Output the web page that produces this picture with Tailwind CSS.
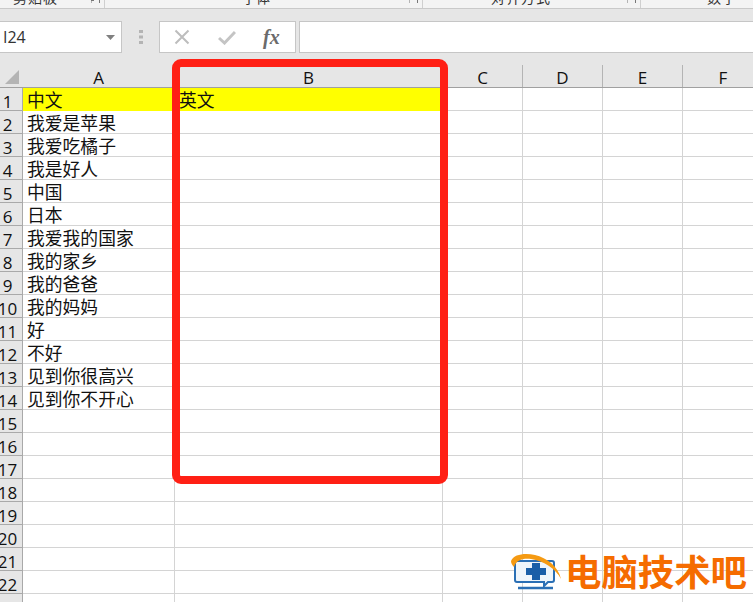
<!DOCTYPE html>
<html lang="zh">
<head>
<meta charset="utf-8">
<script src="https://cdn.jsdelivr.net/npm/@tailwindcss/browser@4"></script>
</head>
<body class="m-0 w-[753px] h-[602px] overflow-hidden bg-white font-['Liberation_Sans','Noto_Sans_CJK_SC',sans-serif] text-black">
<div class="relative w-[753px] h-[602px] overflow-hidden">

  <!-- ribbon remains -->
  <div class="flex h-[9px] overflow-hidden bg-[#f3f3f3] border-b border-[#c9c9c9] text-[14px] leading-[16px] text-[#333] items-end">
    <div class="flex w-[105px] h-[8px] items-end border-r border-[#cfcfcf] pl-[13px] pr-[4px]"><span class="shrink-0 tracking-[1px] mb-[2px]">剪贴板</span><svg class="ml-auto mb-[5px]" width="9" height="3"><path d="M0 .5H3M0 0V3M8.5 0V3" stroke="#777" fill="none"/></svg></div>
    <div class="flex w-[318px] h-[8px] items-end border-r border-[#cfcfcf] pl-[137px] pr-[4px]"><span class="shrink-0 mb-[2px]">字体</span><svg class="ml-auto mb-[5px]" width="9" height="3"><path d="M0 0V3M8.5 0V3" stroke="#777" fill="none"/></svg></div>
    <div class="flex w-[218px] h-[8px] items-end border-r border-[#cfcfcf] pl-[68px] pr-[4px]"><span class="shrink-0 tracking-[1px] mb-[2px]">对齐方式</span><svg class="ml-auto mb-[5px]" width="9" height="3"><path d="M0 0V3M8.5 0V3" stroke="#777" fill="none"/></svg></div>
    <div class="flex flex-1 h-[8px] items-end pl-[66px]"><span class="shrink-0 tracking-[1px] mb-[2px]">数字</span></div>
  </div>

  <!-- formula bar -->
  <div class="h-[44px] bg-[#e6e6e6] pt-[12px] flex items-start">
    <div class="w-[122px] h-[32px] bg-white border-r border-y border-[#c6c6c6] flex items-center pl-[3px] pr-[6px] font-['Open_Sans','Liberation_Sans',sans-serif] text-[16px] text-[#333]">
      <span>I24</span>
      <svg class="ml-auto" width="9" height="5"><path d="M0 0H9L4.5 5Z" fill="#808080"/></svg>
    </div>
    <div class="w-[37px] h-[32px] flex items-center justify-center">
      <svg width="4" height="14"><path d="M0 0h4v3H0zM0 5.5h4v3H0zM0 11h4v3H0z" fill="#b4b4b4"/></svg>
    </div>
    <div class="w-[137px] h-[32px] bg-white border border-[#c6c6c6] flex items-center">
      <svg class="ml-[14px]" width="16" height="16" viewBox="0 0 16 16"><path d="M1.5 1.5L14.5 14.5M14.5 1.5L1.5 14.5" stroke="#bdbdbd" stroke-width="2" fill="none"/></svg>
      <svg class="ml-[28px]" width="18" height="15" viewBox="0 0 18 15"><path d="M1 8L6.5 13L17 2" stroke="#c4c4c4" stroke-width="3" fill="none"/></svg>
      <span class="ml-[27px] font-['Liberation_Serif',serif] italic font-bold text-[20px] leading-none text-[#6b6b6b]">fx</span>
    </div>
    <div class="w-[3px]"></div>
    <div class="flex-1 h-[32px] bg-white border-l border-y border-[#c6c6c6]"></div>
  </div>

  <!-- sheet -->
  <div class="text-[17.8px] leading-[27px] text-[#111]">
    <!-- column headers -->
    <div class="grid grid-cols-[23px_152px_268px_80px_80px_80px_80px] h-[35px] bg-[#e6e6e6] border-b border-[#a0a0a0] items-end font-['Open_Sans','Liberation_Sans',sans-serif] text-[17px]">
      <div class="h-[22px] relative"><svg class="absolute left-[5px] top-[5px]" width="14" height="14"><path d="M14 0V14H0Z" fill="#b4b4b4"/></svg></div>
      <div class="h-[22px] flex justify-center leading-[25px] border-r border-[#b4b4b4]">A</div>
      <div class="h-[22px] flex justify-center leading-[25px] border-r border-[#b4b4b4]">B</div>
      <div class="h-[22px] flex justify-center leading-[25px] border-r border-[#b4b4b4]">C</div>
      <div class="h-[22px] flex justify-center leading-[25px] border-r border-[#b4b4b4]">D</div>
      <div class="h-[22px] flex justify-center leading-[25px] border-r border-[#b4b4b4]">E</div>
      <div class="h-[22px] flex justify-center leading-[25px]">F</div>
    </div>

    <!-- rows -->
    <div class="grid grid-cols-[23px_152px_268px_80px_80px_80px_80px] auto-rows-[23px] *:border-b *:border-r *:border-[#d4d4d4] *:whitespace-nowrap *:overflow-hidden [&>div:nth-child(7n+1)]:bg-[#e6e6e6] [&>div:nth-child(7n+1)]:border-[#a9a9a9] [&>div:nth-child(7n+1)]:pr-[7px] [&>div:nth-child(7n+1)]:flex [&>div:nth-child(7n+1)]:justify-center [&>div:nth-child(7n+1)]:font-['Open_Sans','Liberation_Sans',sans-serif] [&>div:nth-child(7n+1)]:text-[17px]">
      <div>1</div><div class="bg-[#ffff00] !border-[#ffff00] pl-[4px]">中文</div><div class="bg-[#ffff00] !border-[#ffff00] pl-[4px]">英文</div><div></div><div></div><div></div><div></div>
      <div>2</div><div class="pl-[4px]">我爱是苹果</div><div></div><div></div><div></div><div></div><div></div>
      <div>3</div><div class="pl-[4px]">我爱吃橘子</div><div></div><div></div><div></div><div></div><div></div>
      <div>4</div><div class="pl-[4px]">我是好人</div><div></div><div></div><div></div><div></div><div></div>
      <div>5</div><div class="pl-[4px]">中国</div><div></div><div></div><div></div><div></div><div></div>
      <div>6</div><div class="pl-[4px]">日本</div><div></div><div></div><div></div><div></div><div></div>
      <div>7</div><div class="pl-[4px]">我爱我的国家</div><div></div><div></div><div></div><div></div><div></div>
      <div>8</div><div class="pl-[4px]">我的家乡</div><div></div><div></div><div></div><div></div><div></div>
      <div>9</div><div class="pl-[4px]">我的爸爸</div><div></div><div></div><div></div><div></div><div></div>
      <div>10</div><div class="pl-[4px]">我的妈妈</div><div></div><div></div><div></div><div></div><div></div>
      <div>11</div><div class="pl-[4px]">好</div><div></div><div></div><div></div><div></div><div></div>
      <div>12</div><div class="pl-[4px]">不好</div><div></div><div></div><div></div><div></div><div></div>
      <div>13</div><div class="pl-[4px]">见到你很高兴</div><div></div><div></div><div></div><div></div><div></div>
      <div>14</div><div class="pl-[4px]">见到你不开心</div><div></div><div></div><div></div><div></div><div></div>
      <div>15</div><div></div><div></div><div></div><div></div><div></div><div></div>
      <div>16</div><div></div><div></div><div></div><div></div><div></div><div></div>
      <div>17</div><div></div><div></div><div></div><div></div><div></div><div></div>
      <div>18</div><div></div><div></div><div></div><div></div><div></div><div></div>
      <div>19</div><div></div><div></div><div></div><div></div><div></div><div></div>
      <div>20</div><div></div><div></div><div></div><div></div><div></div><div></div>
      <div>21</div><div></div><div></div><div></div><div></div><div></div><div></div>
      <div>22</div><div></div><div></div><div></div><div></div><div></div><div></div>
      <div></div><div></div><div></div><div></div><div></div><div></div><div></div>
    </div>
  </div>

  <!-- red annotation -->
  <div class="absolute left-[172px] top-[59px] w-[276px] h-[425px] border-[8px] border-[#ff2015] rounded-[9px]"></div>

  <!-- watermark -->
  <div class="absolute left-[511px] top-[551px] flex items-start gap-[3px]">
    <svg class="mt-[3px]" width="51" height="36" viewBox="0 0 51 36">
      <path d="M6 7H41Q43 7 43 9V26Q43 28 41 28H37L33 32V28H6Q4 28 4 26V9Q4 7 6 7Z" fill="#eef5fb" stroke="#2a6fb5" stroke-width="2"/>
      <path d="M7 34H42" stroke="#2a6fb5" stroke-width="2.5"/>
      <path d="M21 9H29V14H35V21H29V26H21V21H15V14H21Z" fill="#1a5fa8"/>
      <path d="M0 7C3 0 14 -1 24 1C36 4 47 12 50 25C45 15 33 7 20 5C12 4 5 6 3 13C1 11 0 9 0 7Z" fill="#f59a12"/>
    </svg>
    <span class="font-['Noto_Sans_CJK_SC',sans-serif] font-bold text-[36.4px] leading-[38px] text-[#f56c00] whitespace-nowrap">电脑技术吧</span>
  </div>
</div>
</body>
</html>
